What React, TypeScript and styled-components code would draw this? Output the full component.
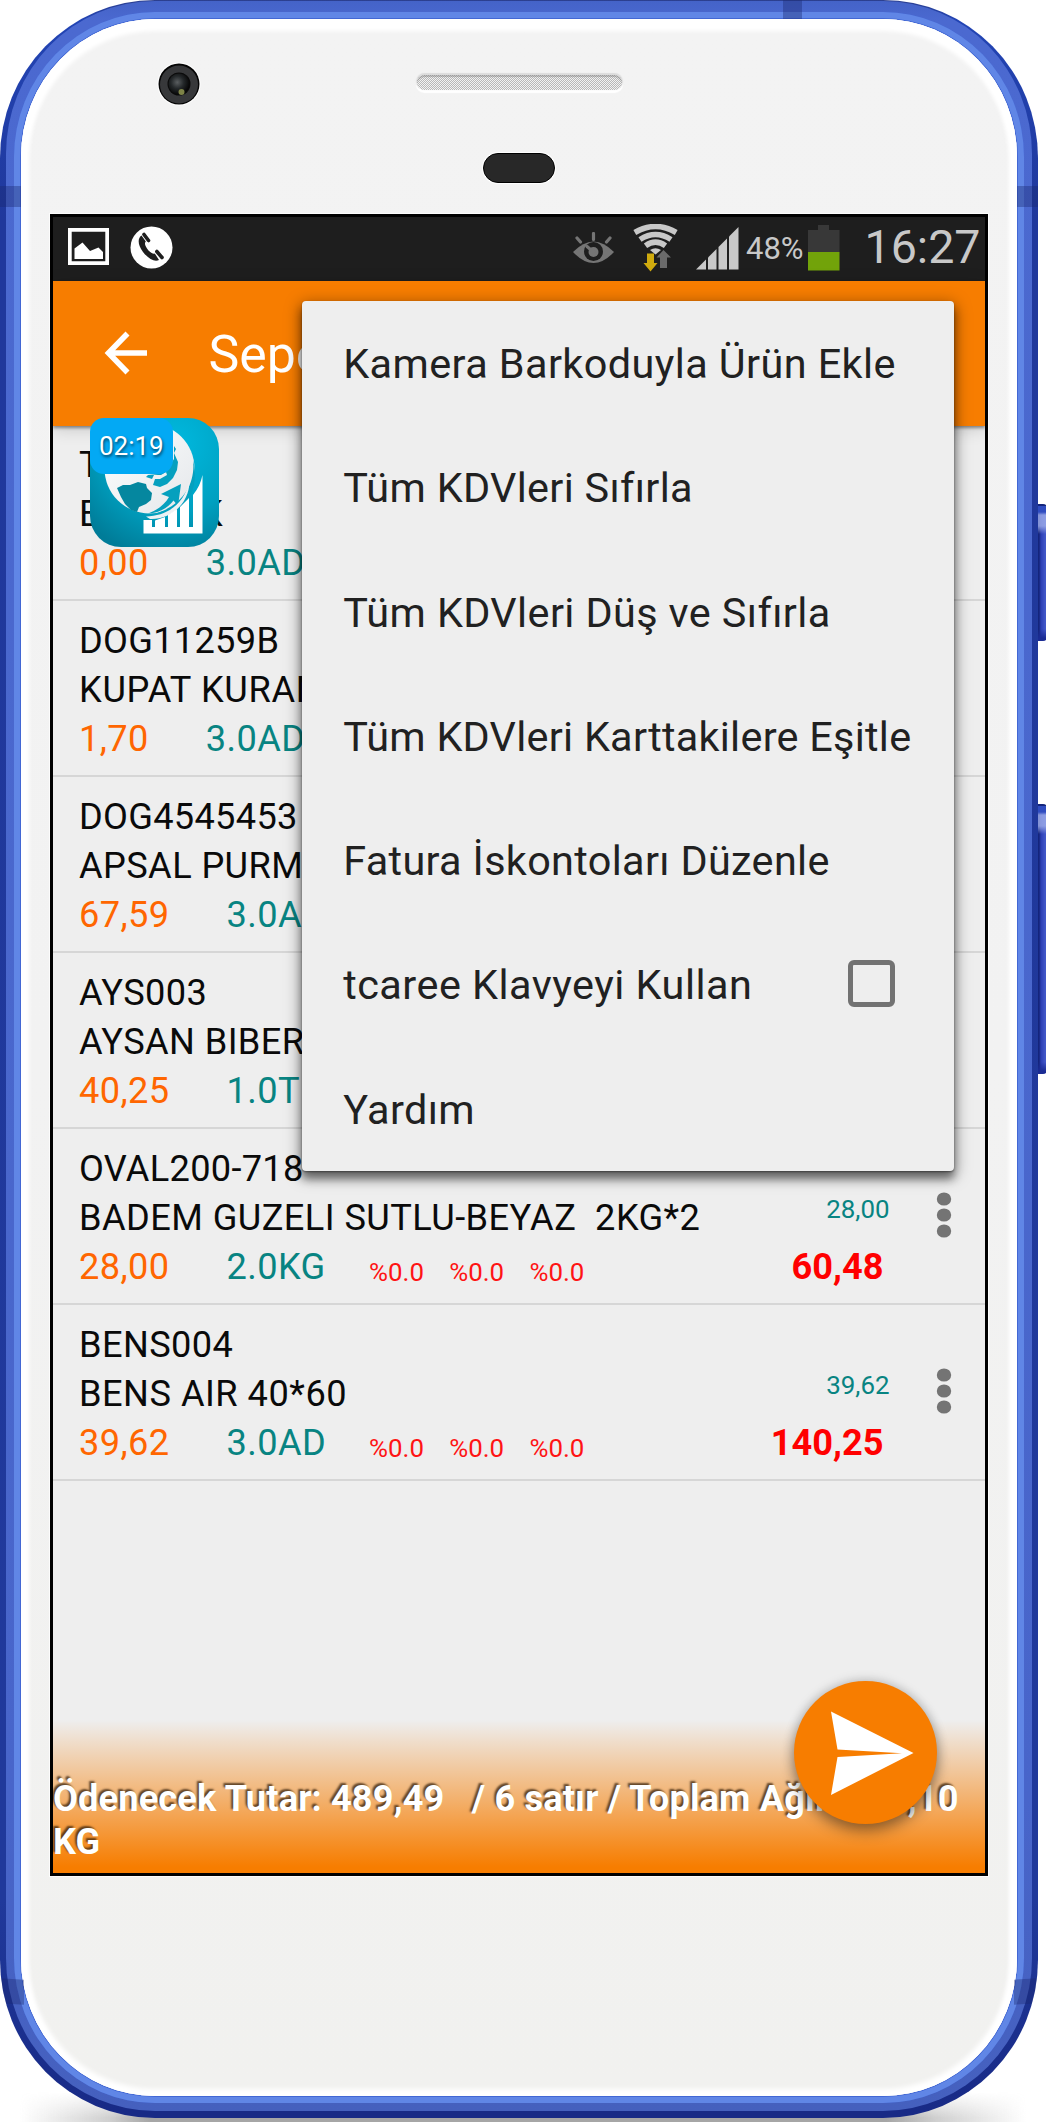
import React from "react";
import styled, { createGlobalStyle } from "styled-components";

const Global = createGlobalStyle`
  html, body { margin: 0; padding: 0; background: #fff; }
  * { box-sizing: border-box; }
  body { width: 1046px; height: 2122px; overflow: hidden; font-family: Roboto, "Liberation Sans", sans-serif; }
`;

const Stage = styled.div`
  position: relative;
  width: 1046px;
  height: 2122px;
  overflow: hidden;
  background: #fff;
`;

const GroundShadow = styled.div`
  position: absolute;
  left: 20px;
  right: 20px;
  top: 2092px;
  height: 30px;
  background: linear-gradient(to right, transparent, rgba(160, 160, 160, 0.5) 90px, #a6a6a6 130px calc(100% - 140px), rgba(160, 160, 160, 0.5) calc(100% - 90px), transparent);
  mask-image: linear-gradient(to bottom, transparent, #000 26px);
`;

const SideButton = styled.div<{ $top: number; $height: number }>`
  position: absolute;
  left: 1037px;
  top: ${(p) => p.$top}px;
  width: 10px;
  height: ${(p) => p.$height}px;
  border-radius: 0 4px 4px 0;
  background:
    linear-gradient(to bottom, #14257c 0 2px, #2f4cc0 2px 8px, rgba(160, 175, 235, 0.8) 11px 22px, transparent 30px calc(100% - 12px), #1b2c94 calc(100% - 3px)),
    linear-gradient(to right, #14257c 0 2px, #2c3fb4 4px, #4157c8 8px);
`;

const Casing = styled.div`
  position: relative;
  width: 1038px;
  height: 2118px;
  padding: 1px 6px 7px;
  border-radius: 155px / 158px;
  overflow: hidden;
  background: linear-gradient(to bottom, #2c3f8f 0, #2244b4 20px, #20389c 220px, #20399b 1900px, #182a86 2110px);
`;

const CasingMid = styled.div`
  height: 100%;
  padding: 11px 8px 8px;
  border-radius: 149px / 153px;
  background: linear-gradient(to bottom, #4463c8, #4b69d0 20px, #4865ca 1800px, #4560be);
`;

const CasingLight = styled.div`
  height: 100%;
  padding: 7px;
  border-radius: 141px / 145px;
  background: #4267d4;
  box-shadow: inset 0 0 0 6px #6086e6;
`;

const Face = styled.div`
  position: relative;
  height: 100%;
  border-radius: 134px / 138px;
  background: linear-gradient(to bottom, #f3f3f3, #f2f2f2 50%, #f1f1ef);
  box-shadow: inset 0 5px 4px 7px #fff, inset 0 0 5px 7px #fff;
  padding: 0 29px;
`;

const Antenna = styled.div<{ $x: number; $y: number; $w: number; $h: number; $skew?: number }>`
  position: absolute;
  left: ${(p) => p.$x}px;
  top: ${(p) => p.$y}px;
  width: ${(p) => p.$w}px;
  height: ${(p) => p.$h}px;
  background: rgba(25, 40, 110, 0.38);
  transform: skewY(${(p) => p.$skew ?? 0}deg);
`;

const Bezel = styled.div`
  height: 194.5px;
  display: grid;
  grid-template-columns: 1fr 208px 1fr;
  align-items: start;
`;

const CameraSvg = styled.svg`
  display: block;
  margin: 43px 0 0 107px;
`;

const Center = styled.div`
  display: flex;
  flex-direction: column;
  align-items: center;
`;

const Speaker = styled.div`
  margin-top: 56px;
  width: 205px;
  height: 15px;
  border-radius: 8px;
  background: conic-gradient(#b8b8b8 25%, #f2f2f2 0 50%, #b8b8b8 0 75%, #f2f2f2 0) 0 0 / 2px 2px;
  box-shadow: inset 0 2px 1px rgba(120, 120, 120, 0.4), 0 -1px 1px 1px #dcdcdc, 0 2px 1px 1px #fff;
`;

const Sensor = styled.div`
  margin-top: 63px;
  width: 72px;
  height: 30px;
  border-radius: 15px;
  background: #282828;
  border: 1px solid #000;
  box-shadow: 0 0 1px 1px #fff;
`;

const Screen = styled.main`
  position: relative;
  width: 938px;
  height: 1662px;
  border: 3px solid #000;
  background: #eee;
  box-shadow: 0 0 0 1px #fcfcfc;
  overflow: hidden;
`;

const StatusBar = styled.header`
  height: 64.5px;
  display: flex;
  align-items: flex-start;
  background: #1e1e1e;
  color: #c8c8c8;
  svg { display: block; flex: none; }
`;

const StatusSlot = styled.div<{ $left: number; $top: number; $width?: number }>`
  flex: none;
  margin: ${(p) => p.$top}px 0 0 ${(p) => p.$left}px;
  width: ${(p) => (p.$width ? p.$width + "px" : "auto")};
`;

const StatusText = styled.span<{ $size: number }>`
  display: block;
  white-space: nowrap;
  font-size: ${(p) => p.$size}px;
  line-height: ${(p) => p.$size}px;
`;

const AppBar = styled.div`
  position: relative;
  height: 145px;
  display: flex;
  align-items: center;
  background: #f77d00;
  color: #fff;
  box-shadow: 0 2px 3px rgba(0, 0, 0, 0.4), 0 3px 16px rgba(0, 0, 0, 0.16);
  svg { display: block; margin: -1px 0 0 51px; }
`;

const Title = styled.h1`
  margin: 3px 0 0 60.5px;
  font-size: 51.8px;
  font-weight: 400;
  line-height: 60px;
`;

const List = styled.ul`
  margin: -1px 0 0;
  padding: 0;
  list-style: none;
`;

const Row = styled.li`
  height: 176px;
  padding: 14.9px 33.5px 0 26px;
  display: flex;
  justify-content: space-between;
  border-bottom: 2px solid #d6d6d6;
  font-size: 36.2px;
  line-height: 49.3px;
  white-space: pre;
  color: #0a0a0a;
`;

const Label = styled.div<{ $ls?: number }>`
  height: 49.3px;
  letter-spacing: ${(p) => p.$ls ?? 0.4}px;
`;

const Figures = styled.div`
  display: flex;
  height: 49.3px;
`;

const Price = styled.span`
  color: #ff6600;
  letter-spacing: 0.4px;
  margin-right: 57px;
`;

const Qty = styled.span`
  color: #088482;
  letter-spacing: 0.4px;
  width: 142.6px;
`;

const Rate = styled.span`
  width: 80.2px;
  color: #ff1414;
  font-size: 25.9px;
  line-height: 60.5px;
`;

const Side = styled.div`
  display: flex;
`;

const Totals = styled.div`
  display: flex;
  flex-direction: column;
  align-items: flex-end;
  padding: 40.2px 46px 0 0;
`;

const UnitPrice = styled.span`
  color: #088482;
  font-size: 25.9px;
  line-height: 50px;
`;

const Total = styled.b`
  margin: 8px 6px 0 0;
  color: #ff0000;
  font-weight: 700;
  line-height: 49px;
`;

const Dots = styled.svg`
  display: block;
  margin-top: 48.5px;
`;

const Menu = styled.div`
  position: absolute;
  left: 248.7px;
  top: 84.2px;
  width: 652.3px;
  height: 870px;
  border-radius: 4px;
  background: #eee;
  box-shadow: 0 8px 8px rgba(0, 0, 0, 0.42), 0 4px 16px 2px rgba(0, 0, 0, 0.36), 0 1px 2px rgba(0, 0, 0, 0.4);
`;

const MenuItem = styled.div<{ $ls: number }>`
  height: 124.28px;
  padding: 2.6px 59px 0 41.5px;
  display: flex;
  align-items: center;
  justify-content: space-between;
  font-size: 41.4px;
  color: #212121;
  white-space: nowrap;
  letter-spacing: ${(p) => p.$ls}px;
`;

const Checkbox = styled.span`
  width: 47px;
  height: 47px;
  margin-top: -3px;
  border: 5px solid #727272;
  border-radius: 6px;
`;

const Footer = styled.footer`
  position: absolute;
  left: 0;
  right: 0;
  bottom: 0;
  height: 153px;
  padding-top: 58.6px;
  background: linear-gradient(to bottom, rgba(247, 125, 0, 0), rgba(247, 125, 0, 0.5) 48%, #f77d00 96%);
  color: #fff;
  font-size: 36.2px;
  font-weight: 700;
  line-height: 42.5px;
  letter-spacing: 0.13px;
  white-space: pre-wrap;
  text-shadow: -2px -2px 2px rgba(50, 30, 10, 0.75);
`;

const Fab = styled.button`
  position: absolute;
  left: 741px;
  top: 1464px;
  width: 143px;
  height: 143px;
  padding: 0;
  border: 0;
  border-radius: 50%;
  background: #f77d00;
  box-shadow: 0 8px 14px rgba(0, 0, 0, 0.32), 0 0 12px rgba(0, 0, 0, 0.22);
  svg { display: block; }
`;

const Floating = styled.div`
  position: absolute;
  left: 36.6px;
  top: 201.2px;
  width: 129px;
  height: 129px;
  svg { display: block; }
`;

const Timer = styled.span`
  position: absolute;
  left: 0;
  top: 0;
  width: 83.5px;
  height: 56px;
  border-radius: 14px;
  background: #03a9f4;
  color: #fff;
  font-size: 26px;
  line-height: 57px;
  text-align: center;
  text-shadow: 1px 2px 3px rgba(0, 0, 0, 0.6);
`;

type Item = {
  code: string;
  name: string;
  price: string;
  qty: string;
  total?: string;
  rates?: string[];
  codeLs?: number;
  nameLs?: number;
};

const items: Item[] = [
  { code: "T10", name: "BARDAK", price: "0,00", qty: "3.0AD", nameLs: 1.1 },
  { code: "DOG11259B", name: "KUPAT KURAN", price: "1,70", qty: "3.0AD", codeLs: 0.3, nameLs: 0.7 },
  { code: "DOG4545453", name: "APSAL PURM", price: "67,59", qty: "3.0AD", codeLs: 0.3 },
  { code: "AYS003", name: "AYSAN BIBER", price: "40,25", qty: "1.0TN" },
  {
    code: "OVAL200-718",
    name: "BADEM GUZELI SUTLU-BEYAZ  2KG*2",
    price: "28,00",
    qty: "2.0KG",
    total: "60,48",
    rates: ["%0.0", "%0.0", "%0.0"],
    codeLs: 0.3,
    nameLs: 0.44,
  },
  {
    code: "BENS004",
    name: "BENS AIR 40*60",
    price: "39,62",
    qty: "3.0AD",
    total: "140,25",
    rates: ["%0.0", "%0.0", "%0.0"],
    nameLs: 0.5,
  },
];

const menu: { text: string; ls: number; check?: boolean }[] = [
  { text: "Kamera Barkoduyla Ürün Ekle", ls: 0.41 },
  { text: "Tüm KDVleri Sıfırla", ls: 0.32 },
  { text: "Tüm KDVleri Düş ve Sıfırla", ls: 0.39 },
  { text: "Tüm KDVleri Karttakilere Eşitle", ls: 0.26 },
  { text: "Fatura İskontoları Düzenle", ls: 0.33 },
  { text: "tcaree Klavyeyi Kullan", ls: 0.48, check: true },
  { text: "Yardım", ls: 0.4 },
];

const Camera = () => (
  <CameraSvg width="44" height="44" viewBox="0 0 44 44">
    <defs>
      <radialGradient id="lens" cx="0.42" cy="0.42" r="0.6">
        <stop offset="0" stopColor="#5a5e60" />
        <stop offset="0.5" stopColor="#24282a" />
        <stop offset="1" stopColor="#050505" />
      </radialGradient>
    </defs>
    <circle cx="22" cy="22" r="21.6" fill="#fff" />
    <circle cx="22" cy="22" r="20.5" fill="#050505" />
    <circle cx="22" cy="22.5" r="19" fill="#37383a" />
    <circle cx="22" cy="22" r="11.5" fill="#0a0a0a" />
    <circle cx="22" cy="22" r="10.5" fill="url(#lens)" />
    <circle cx="24.5" cy="30" r="3" fill="#7d8347" />
  </CameraSvg>
);

const PictureIcon = () => (
  <svg width="41" height="37" viewBox="0 0 41 37">
    <path d="M0 0H41V37H0Z M3.7 3.7V33.3H37.3V3.7Z" fill="#fff" fillRule="evenodd" />
    <path d="M6.5 31V20.5L14.5 14.5L22 23L30.5 19.5L35 24V31Z" fill="#fff" />
  </svg>
);

const PhoneIcon = () => (
  <svg width="43" height="43" viewBox="0 0 43 43">
    <circle cx="21.5" cy="21.5" r="21" fill="#fff" />
    <path d="M11.5 9.5C7.5 12 7.5 19 13 26C18.5 33 25 36.5 29 34L24.8 27.5C22.5 28.5 19 25.5 17 22.5C15 19.5 14.2 17 15.8 15.5Z" fill="#1e1e1e" />
    <path d="M14 8.5L18.5 14.5M26.8 25.5L32 31.5" stroke="#1e1e1e" strokeWidth="3.6" strokeLinecap="round" />
  </svg>
);

const EyeIcon = () => (
  <svg width="42" height="32" viewBox="0 0 42 32">
    <path d="M0 20Q20.5 -1 41 20Q20.5 42 0 20Z" fill="#757575" />
    <circle cx="20.5" cy="19.5" r="9.5" fill="#1e1e1e" />
    <circle cx="20.5" cy="20" r="5" fill="#757575" />
    <path d="M14 14.5L20.5 20M20.5 1.5V7.5M4 6L7.5 10M37 6L33.5 10" stroke="#757575" strokeWidth="3.2" strokeLinecap="round" />
  </svg>
);

const WifiIcon = () => (
  <svg width="46" height="48" viewBox="0 0 46 48">
    <g fill="none" stroke="#c8c8c8" strokeWidth="5.6">
      <path d="M1.8 8.5Q22.5 -3.500 43.2 8.5" />
      <path d="M7 15.5Q22.5 5.5 38 15.5" />
      <path d="M12.5 21.8Q22.5 14.6 32.5 21.8" />
    </g>
    <path d="M17 26Q22.5 22.5 28 26L22.5 30.5Z" fill="#c8c8c8" />
    <path d="M14 29.5H21V39H24.5L17.5 47.5L10.5 39H14Z" fill="#d0ab0e" />
    <path d="M27 44V33.5H23.5L30.5 26L38 33.5H34V44Z" fill="#6a6a6a" />
  </svg>
);

const SignalIcon = () => (
  <svg width="43" height="43" viewBox="0 0 43 43" fill="#c8c8c8">
    <path d="M0 42.5L10 32.5V42.5Z" />
    <path d="M12 42.5V30.5L20.5 22V42.5Z" />
    <path d="M22.5 42.5V20L31 11.5V42.5Z" />
    <path d="M33 42.5V9.5L42.5 0V42.5Z" />
  </svg>
);

const BatteryIcon = () => (
  <svg width="32" height="46" viewBox="0 0 32 46">
    <path d="M10 0H21V5H31.5V27H0V5H10Z" fill="#383838" />
    <path d="M0 27H31.5V45.5H0Z" fill="#72a30a" />
  </svg>
);

const BackIcon = () => (
  <svg width="44" height="44" viewBox="0 0 44 44">
    <path d="M43 22H5M23.5 2.5L4.5 22L23.5 41.5" fill="none" stroke="#fff" strokeWidth="5.6" />
  </svg>
);

const SendIcon = () => (
  <svg width="143" height="143" viewBox="0 0 143 143">
    <path d="M37 30.5L119.5 72L37 114L43.5 76L108 72.3L43.5 68.5Z" fill="#fff" />
  </svg>
);

const GlobeLogo = () => (
  <svg width="129" height="129" viewBox="0 0 129 129">
    <defs>
      <radialGradient id="teal" cx="0.65" cy="0.2" r="0.9">
        <stop offset="0" stopColor="#00b9df" />
        <stop offset="0.6" stopColor="#00a0c0" />
        <stop offset="1" stopColor="#007c98" />
      </radialGradient>
      <linearGradient id="sphere" x1="0" y1="0" x2="1" y2="1">
        <stop offset="0" stopColor="#fff" />
        <stop offset="1" stopColor="#e4e7ea" />
      </linearGradient>
    </defs>
    <rect width="129" height="129" rx="31" fill="url(#teal)" />
    <circle cx="59.5" cy="50.5" r="45" fill="url(#sphere)" />
    <path d="M84 28L86 31L84 35L88 44L87 52L83 60L77 66L70 69L63 67L65 61L70 61L77 57L76 54L71 57L64 57L62 61L56 59L58 57L68 56L74 53L80 47L84 41Z" fill="#06a0bf" />
    <path d="M27 70L33 67L40 67L48 64L56 66L57 70L62 75L61 82L56 86L49 89L47 94L41 92L35 86L31 79Z" fill="#05879f" />
    <path d="M71 76L91 66L88 88L83.5 82.5C77 91 68 95 58 95.5C68 92 75 86 79 79Z" fill="#05a0be" />
    <path d="M103 42C106 66 92 90 60 97L56 100C88 104 112 78 103 42Z" fill="#05a0be" />
    <path d="M56 98.5C78 98 95 85 99.5 62C100 84 82 102 60 101Z" fill="#eef1f3" />
    <path d="M53.5 102H62V109H65V102.5L75 99V109H78V97L87 91V109H90V89L99 80V109H103V77C108 71 111 64 112.5 57V115.5H53.5Z" fill="#fff" />
  </svg>
);

export default function App() {
  return (
    <>
      <Global />
      <Stage>
        <GroundShadow />
        <SideButton $top={504} $height={137} />
        <SideButton $top={804} $height={270} />
        <Casing>
          <CasingMid>
            <CasingLight>
              <Face>
                <Bezel>
                  <Camera />
                  <Center>
                    <Speaker />
                    <Sensor />
                  </Center>
                </Bezel>
                <Screen>
                  <StatusBar>
                    <StatusSlot $left={15} $top={11.5}><PictureIcon /></StatusSlot>
                    <StatusSlot $left={21} $top={9.2}><PhoneIcon /></StatusSlot>
                    <StatusSlot $left={400} $top={15}><EyeIcon /></StatusSlot>
                    <StatusSlot $left={17.5} $top={7}><WifiIcon /></StatusSlot>
                    <StatusSlot $left={17} $top={10.8}><SignalIcon /></StatusSlot>
                    <StatusSlot $left={7.5} $top={16.4} $width={61.5}><StatusText $size={31}>48%</StatusText></StatusSlot>
                    <StatusSlot $left={0.5} $top={8.5}><BatteryIcon /></StatusSlot>
                    <StatusSlot $left={24.5} $top={7}><StatusText $size={46.6}>16:27</StatusText></StatusSlot>
                  </StatusBar>
                  <AppBar>
                    <BackIcon />
                    <Title>Sepetim</Title>
                  </AppBar>
                  <List>
                    {items.map((it) => (
                      <Row key={it.code}>
                        <div>
                          <Label $ls={it.codeLs}>{it.code}</Label>
                          <Label $ls={it.nameLs}>{it.name}</Label>
                          <Figures>
                            <Price>{it.price}</Price>
                            <Qty>{it.qty}</Qty>
                            {it.rates?.map((r, i) => <Rate key={i}>{r}</Rate>)}
                          </Figures>
                        </div>
                        {it.total && (
                          <Side>
                            <Totals>
                              <UnitPrice>{it.price}</UnitPrice>
                              <Total>{it.total}</Total>
                            </Totals>
                            <Dots width="16" height="46" viewBox="0 0 16 46" fill="#747474">
                              <ellipse cx="8" cy="7" rx="7.2" ry="6.6" />
                              <ellipse cx="8" cy="23" rx="7.2" ry="6.6" />
                              <ellipse cx="8" cy="39" rx="7.2" ry="6.6" />
                            </Dots>
                          </Side>
                        )}
                      </Row>
                    ))}
                  </List>
                  <Footer>{"Ödenecek Tutar: 489,49   / 6 satır / Toplam Ağırlık: 3,10 KG"}</Footer>
                  <Fab aria-label="Gönder"><SendIcon /></Fab>
                  <Floating>
                    <GlobeLogo />
                    <Timer>02:19</Timer>
                  </Floating>
                  <Menu>
                    {menu.map((m) => (
                      <MenuItem key={m.text} $ls={m.ls}>
                        {m.text}
                        {m.check && <Checkbox />}
                      </MenuItem>
                    ))}
                  </Menu>
                </Screen>
              </Face>
            </CasingLight>
          </CasingMid>
          <Antenna $x={0} $y={186} $w={21} $h={21} />
          <Antenna $x={1017} $y={186} $w={21} $h={21} />
          <Antenna $x={783} $y={0} $w={19} $h={19} />
          <Antenna $x={0} $y={1979} $w={24} $h={25} $skew={3} />
          <Antenna $x={1014} $y={1979} $w={24} $h={25} $skew={-3} />
        </Casing>
      </Stage>
    </>
  );
}
